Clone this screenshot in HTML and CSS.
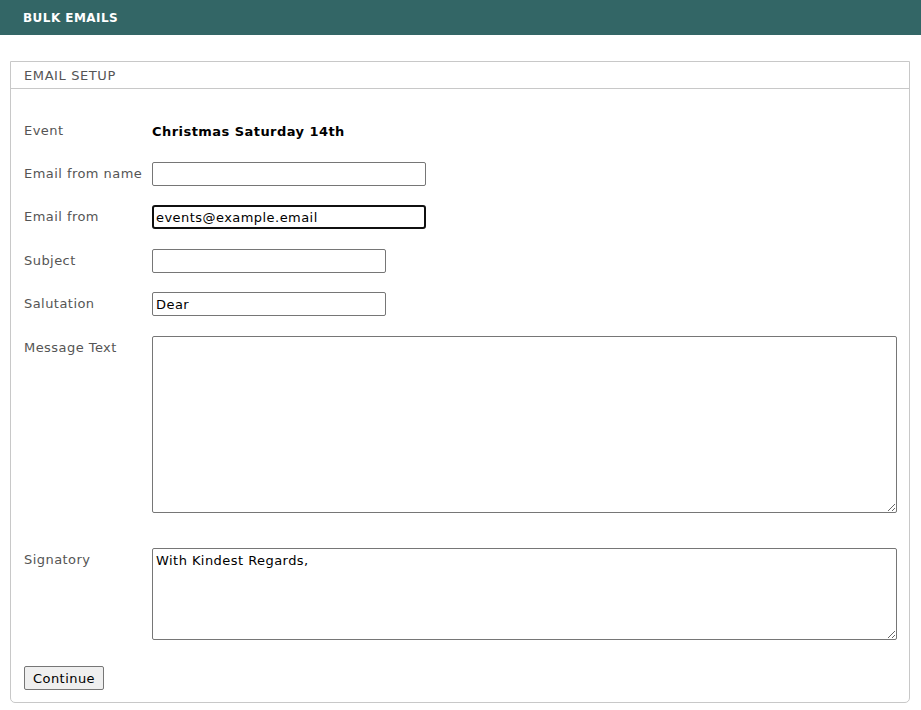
FILE: index.html
```html
<!DOCTYPE html>
<html>
<head>
<meta charset="utf-8">
<title>Bulk Emails</title>
<link rel="stylesheet" href="styles.css">
</head>
<body>
<header class="topbar"><span class="topbar-title">BULK EMAILS</span></header>
<main class="content">
  <section class="panel">
    <div class="panel-head">EMAIL SETUP</div>
    <form class="panel-body">
      <div class="form-grid">
        <div class="label label-event">Event</div>
        <div class="event-name">Christmas Saturday 14th</div>

        <label class="label">Email from name</label>
        <div><input class="field field-wide" type="text"></div>

        <label class="label">Email from</label>
        <div><input class="field field-wide field-focus" type="text" value="events@example.email"></div>

        <label class="label">Subject</label>
        <div><input class="field field-narrow" type="text"></div>

        <label class="label">Salutation</label>
        <div><input class="field field-narrow" type="text" value="Dear"></div>

        <label class="label">Message Text</label>
        <div><textarea class="area area-message"></textarea></div>

        <label class="label">Signatory</label>
        <div><textarea class="area area-sign">With Kindest Regards,</textarea></div>
      </div>
      <div class="actions"><button type="button" class="btn">Continue</button></div>
    </form>
  </section>
</main>
</body>
</html>
```
FILE: styles.css
```css
html, body {
  margin: 0;
  padding: 0;
  background: #ffffff;
}
body {
  font-family: "DejaVu Sans", Verdana, sans-serif;
  font-size: 13px;
  letter-spacing: 0.45px;
  color: #000;
}
.topbar {
  height: 35px;
  background: #336666;
  display: flex;
  align-items: center;
  padding-left: 23px;
}
.topbar-title {
  color: #fff;
  font-weight: bold;
  font-size: 12px;
  letter-spacing: 0.45px;
}
.content {
  padding: 26px 11px 8px 10px;
}
.panel {
  border: 1px solid #c8c8c8;
  border-radius: 0 0 5px 5px;
}
.panel-head {
  height: 26px;
  border-bottom: 1px solid #c8c8c8;
  padding-left: 13px;
  display: flex;
  align-items: center;
  color: #555;
  font-size: 13px;
  letter-spacing: 0.6px;
}
.panel-body {
  margin: 0;
  padding: 30px 11px 12px 13px;
}
.form-grid {
  display: grid;
  grid-template-columns: 128px 1fr;
  row-gap: 19.5px;
  align-items: start;
}
.label {
  color: #555;
  padding-top: 4px;
  line-height: 16px;
}
.label-event {
  padding-top: 4px;
}
.event-name {
  font-weight: bold;
  height: 23px;
  line-height: 25px;
}
.field {
  box-sizing: border-box;
  height: 24px;
  border: 1px solid #767676;
  border-radius: 2px;
  font: inherit;
  letter-spacing: inherit;
  font-size: 13px;
  padding: 1px 3px;
  margin: 0;
  display: block;
  background: #fff;
}
.field-wide { width: 274px; }
.field-narrow { width: 234px; }
.field-focus {
  border: 2px solid #101010;
  border-radius: 3px;
  padding: 0 2px;
}
.area {
  box-sizing: border-box;
  width: 745px;
  border: 1px solid #767676;
  border-radius: 2px;
  font: inherit;
  letter-spacing: inherit;
  font-size: 13px;
  padding: 4px 3px 2px;
  margin: 0;
  display: block;
  resize: both;
}
.area-message {
  height: 177px;
  margin-bottom: 16px;
}
.area-sign {
  height: 92px;
}
.actions {
  margin-top: 26px;
}
.btn {
  font: inherit;
  letter-spacing: inherit;
  font-size: 13px;
  width: 80px;
  height: 24px;
  background: #efefef;
  border: 1px solid #767676;
  border-radius: 2px;
  color: #000;
  padding: 0;
}
```
